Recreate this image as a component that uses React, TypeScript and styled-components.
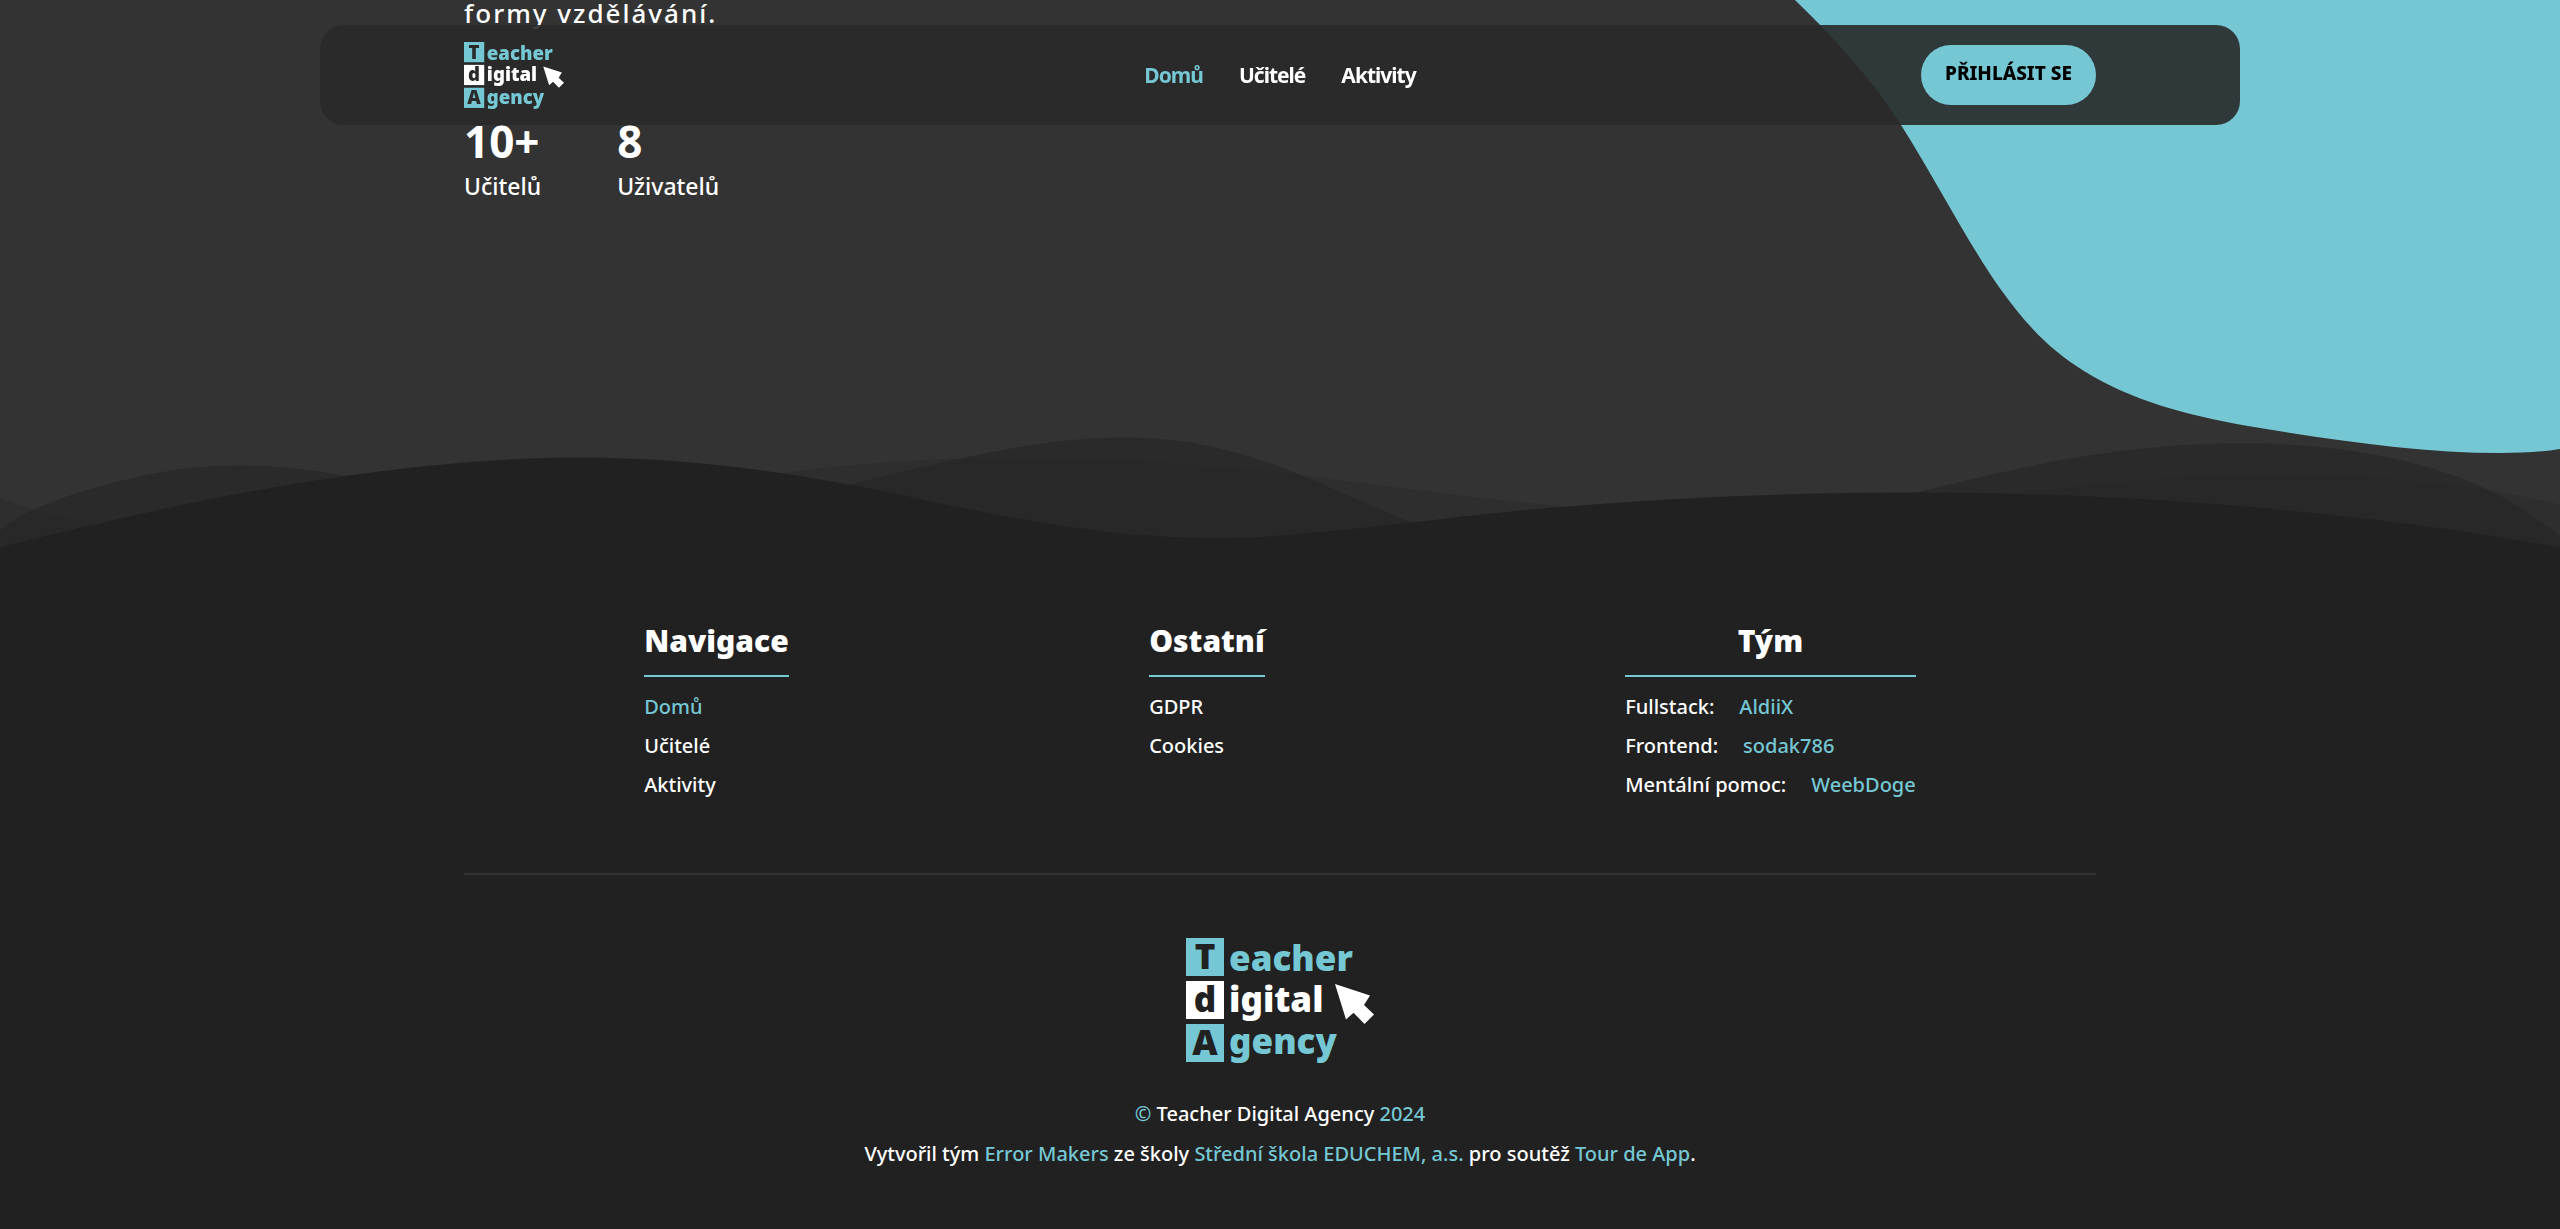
import React from "react";
import styled, { createGlobalStyle } from "styled-components";

const color = {
  page: "#333333",
  dark: "#212121",
  teal: "#75c7d3",
  white: "#ffffff",
  rule: "#333333",
};

const GlobalStyle = createGlobalStyle`
  *, *::before, *::after { box-sizing: border-box; }
  body {
    margin: 0;
    background: ${color.dark};
    color: ${color.white};
    font-family: "Noto Sans", "Open Sans", sans-serif;
    font-size: 20px;
    font-weight: 500;
    line-height: 28px;
  }
  a { color: inherit; text-decoration: none; }
  ul { list-style: none; margin: 0; padding: 0; }
  h2, p, dl, dd { margin: 0; }
`;

const Container = styled.div`
  width: 85%;
  max-width: 1632px;
  margin: 0 auto;
`;

const Header = styled.header`
  position: fixed;
  z-index: 10;
  top: 25px;
  left: 0;
  right: 0;
  width: 75%;
  margin: 0 auto;
  border-radius: 24px;
  background: rgba(41, 41, 41, 0.9);
`;

const HeaderInner = styled(Container)`
  display: grid;
  grid-template-columns: 1fr auto 1fr;
  align-items: center;
  height: 100px;
`;

const Nav = styled.nav`
  display: flex;
  gap: 36px;
`;

const NavLink = styled.a<{ $active?: boolean }>`
  color: ${(p) => (p.$active ? color.teal : color.white)};
  font-size: 21px;
  font-weight: 700;
  line-height: 30px;
  letter-spacing: -1px;
`;

const LoginButton = styled.button`
  justify-self: end;
  height: 60px;
  padding: 0 24px 4px;
  border: 0;
  border-radius: 30px;
  background: ${color.teal};
  color: #000;
  font: 800 19px/24px "Noto Sans", sans-serif;
  text-transform: uppercase;
`;

const Hero = styled.main`
  position: relative;
  background: ${color.page};
`;

const Blob = styled.svg`
  position: absolute;
  top: 0;
  right: 0;
`;

const HeroBody = styled(Container)`
  position: relative;
  padding-bottom: 225px;
`;

const Lead = styled.p`
  font-size: 26px;
  line-height: 26px;
  letter-spacing: 2px;
`;

const Stats = styled.dl`
  display: flex;
  gap: 76px;
  padding-top: 86px;
`;

const Stat = styled.div`
  display: flex;
  flex-direction: column-reverse;
`;

const StatValue = styled.dd`
  font-size: 44px;
  font-weight: 700;
  line-height: 58px;
`;

const StatLabel = styled.dt`
  font-size: 23px;
  line-height: 32px;
`;

const Waves = styled.svg`
  display: block;
  position: relative;
  width: 100%;
  height: 126px;
  transform: rotate(180deg);
`;

const Footer = styled.footer`
  background: ${color.dark};
  padding: 66px 0 61px;
`;

const Columns = styled(Container)`
  display: flex;
  justify-content: space-around;
  align-items: flex-start;
  padding-bottom: 75px;
  border-bottom: 2px solid ${color.rule};
`;

const ColumnTitle = styled.h2`
  padding-bottom: 12px;
  margin-bottom: 16px;
  border-bottom: 2px solid ${color.teal};
  font-size: 30px;
  font-weight: 900;
  line-height: 44px;
  text-align: center;
`;

const Links = styled.ul`
  display: grid;
  gap: 12px;
  line-height: 27px;
`;

const Item = styled.li`
  display: flex;
  gap: 25px;
`;

const Accent = styled.a`
  color: ${color.teal};
`;

const AccentText = styled.span`
  color: ${color.teal};
`;

const Credits = styled(Container)`
  display: flex;
  flex-direction: column;
  align-items: center;
  gap: 12px;
  padding-top: 63px;
  text-align: center;
`;

const LogoSvg = styled.svg<{ $width: number }>`
  display: block;
  overflow: visible;
  width: ${(p) => p.$width}px;
  height: auto;
  font-family: "Noto Sans", sans-serif;
  font-weight: 900;
`;

const FooterLogo = styled.div`
  padding-bottom: 25px;
`;

function Logo({ width, ink }: { width: number; ink: string }) {
  return (
    <LogoSvg $width={width} viewBox="0 0 188 125" role="img" aria-label="Teacher digital Agency">
      <rect width="38" height="38" fill={color.teal} />
      <rect y="43" width="38" height="38" fill={color.white} />
      <rect y="86" width="38" height="38" fill={color.teal} />
      <g fill={ink} fontSize="35" textAnchor="middle">
        <text x="19" y="31">T</text>
        <text x="19" y="74">d</text>
        <text x="19" y="117">A</text>
      </g>
      <g fill={color.teal} fontSize="35">
        <text x="43" y="33">eacher</text>
        <text x="43" y="74" fill={color.white}>igital</text>
        <text x="43" y="116">gency</text>
      </g>
      <path d="M149 46 184 57.5 178 67 188 76.5 178.5 86 167.5 74.7 160 81.5Z" fill={color.white} />
    </LogoSvg>
  );
}

const pages = ["Domů", "Učitelé", "Aktivity"];

const team = [
  { role: "Fullstack:", name: "AldiiX" },
  { role: "Frontend:", name: "sodak786" },
  { role: "Mentální pomoc:", name: "WeebDoge" },
];

export default function App() {
  return (
    <>
      <GlobalStyle />
      <Header>
        <HeaderInner>
          <a href="#"><Logo width={100} ink="#2a2a2a" /></a>
          <Nav>
            {pages.map((page, i) => (
              <NavLink key={page} href="#" $active={i === 0}>{page}</NavLink>
            ))}
          </Nav>
          <LoginButton type="button">Přihlásit se</LoginButton>
        </HeaderInner>
      </Header>

      <Hero>
        <Blob width="765" height="454" viewBox="1795 0 765 454" aria-hidden="true">
          <path
            fill={color.teal}
            d="M1795 0C1832 36 1870 76 1901 125C1937 182 1968 243 1999 287C2026 325 2050 350 2084 371C2132 401 2187 415 2248 426C2332 440 2420 453 2501 453C2522 453 2542 452 2560 449V0Z"
          />
        </Blob>
        <HeroBody>
          <Lead>formy vzdělávání.</Lead>
          <Stats>
            <Stat>
              <StatLabel>Učitelů</StatLabel>
              <StatValue>10+</StatValue>
            </Stat>
            <Stat>
              <StatLabel>Uživatelů</StatLabel>
              <StatValue>8</StatValue>
            </Stat>
          </Stats>
        </HeroBody>
        <Waves viewBox="0 0 1200 120" preserveAspectRatio="none" fill={color.dark} aria-hidden="true">
          <path
            opacity=".25"
            d="M0,0V46.29c47.79,22.2,103.59,32.17,158,28,70.36-5.37,136.33-33.31,206.8-37.5C438.64,32.43,512.34,53.67,583,72.05c69.27,18,138.3,24.88,209.4,13.08,36.15-6,69.85-17.84,104.45-29.34C989.49,25,1113-14.29,1200,52.47V0Z"
          />
          <path
            opacity=".5"
            d="M0,0V15.81C13,36.92,27.64,56.86,47.69,72.05,99.41,111.27,165,111,224.58,91.58c31.15-10.15,60.09-26.07,89.67-39.8,40.92-19,84.73-46,130.83-49.67,36.26-2.85,70.9,9.42,98.6,31.56,31.77,25.39,62.32,62,103.63,73,40.44,10.79,81.35-6.69,119.13-24.28s75.16-39,116.92-43.05c59.73-5.85,113.28,22.88,168.9,38.84,30.2,8.66,59,6.17,87.09-7.5,22.43-10.89,48-26.93,60.65-49.24V0Z"
          />
          <path d="M0,0V5.63C149.93,59,314.09,71.32,475.83,42.57c43-7.64,84.23-20.12,127.61-26.46,59-8.63,112.48,12.24,165.56,35.4C827.93,77.22,886,95.24,951.2,90c86.53-7,172.46-45.71,248.8-84.81V0Z" />
        </Waves>
      </Hero>

      <Footer>
        <Columns>
          <section>
            <ColumnTitle>Navigace</ColumnTitle>
            <Links>
              {pages.map((page, i) => (
                <Item key={page}>{i === 0 ? <Accent href="#">{page}</Accent> : <a href="#">{page}</a>}</Item>
              ))}
            </Links>
          </section>
          <section>
            <ColumnTitle>Ostatní</ColumnTitle>
            <Links>
              <Item><a href="#">GDPR</a></Item>
              <Item><a href="#">Cookies</a></Item>
            </Links>
          </section>
          <section>
            <ColumnTitle>Tým</ColumnTitle>
            <Links>
              {team.map(({ role, name }) => (
                <Item key={name}>
                  <span>{role}</span>
                  <Accent href="#">{name}</Accent>
                </Item>
              ))}
            </Links>
          </section>
        </Columns>
        <Credits>
          <FooterLogo><Logo width={188} ink={color.dark} /></FooterLogo>
          <p>
            <AccentText>©</AccentText> Teacher Digital Agency <AccentText>2024</AccentText>
          </p>
          <p>
            Vytvořil tým <Accent href="#">Error Makers</Accent> ze školy{" "}
            <Accent href="#">Střední škola EDUCHEM, a.s.</Accent> pro soutěž <Accent href="#">Tour de App</Accent>.
          </p>
        </Credits>
      </Footer>
    </>
  );
}
